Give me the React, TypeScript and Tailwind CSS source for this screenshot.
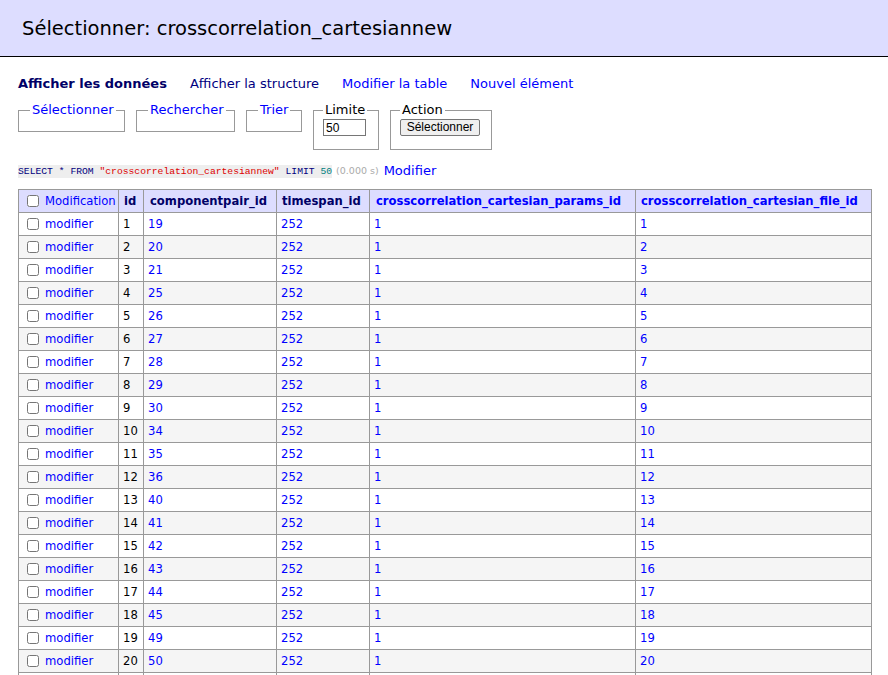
import React from "react";

const pairs = [19, 20, 21, 25, 26, 27, 28, 29, 30, 34, 35, 36, 40, 41, 42, 43, 44, 45, 49, 50, 51];

const Box = () => (
  <input type="checkbox" className="m-0 mr-[6px] h-[12px] w-[12px] align-[-2px]" readOnly />
);

const Legend = ({ children, link }: { children: React.ReactNode; link?: boolean }) => (
  <legend className={`px-[2px] ${link ? "text-[#0000ff]" : "text-black"}`}>{children}</legend>
);

export default function App() {
  return (
    <div className="min-h-screen bg-white text-[13px] leading-[16px] text-black" style={{ fontFamily: '"DejaVu Sans", Verdana, sans-serif' }}>
      <div className="flex h-[57px] items-center border-b border-black bg-[#ddf] pl-[22px] pt-[2px]">
        <h2 className="text-[19.5px] font-normal">Sélectionner: crosscorrelation_cartesiannew</h2>
      </div>

      <div className="pl-[18px]">
        <div className="mt-[19px] flex gap-[23px]">
          <span className="font-bold text-[#000066]">Afficher les données</span>
          <span className="text-[#000080]">Afficher la structure</span>
          <span className="text-[#0000ff]">Modifier la table</span>
          <span className="text-[#0000ff]">Nouvel élément</span>
        </div>

        <div className="mt-[10px] flex items-start gap-[11px]">
          <fieldset className="h-[30px] w-[107px] border border-[#999] pl-[11px] pr-0">
            <Legend link>Sélectionner</Legend>
          </fieldset>
          <fieldset className="h-[30px] w-[99px] border border-[#999] pl-[11px] pr-0">
            <Legend link>Rechercher</Legend>
          </fieldset>
          <fieldset className="h-[30px] w-[56px] border border-[#999] pl-[11px] pr-0">
            <Legend link>Trier</Legend>
          </fieldset>
          <fieldset className="h-[48px] w-[66px] border border-[#999] pl-[9px] pr-0">
            <Legend>Limite</Legend>
            <input
              readOnly
              value="50"
              className="mt-[1px] h-[17px] w-[43px] border border-[#767676] px-[2px] text-[12px] leading-[15px]"
              style={{ fontFamily: '"Liberation Sans", Arial, sans-serif' }}
            />
          </fieldset>
          <fieldset className="h-[48px] w-[102px] border border-[#999] pl-[9px] pr-0">
            <Legend>Action</Legend>
            <button
              className="mt-[1px] h-[17px] w-[80px] rounded-[2px] border border-[#767676] bg-[#efefef] text-[12px] leading-[15px]"
              style={{ fontFamily: '"Liberation Sans", Arial, sans-serif' }}
            >
              Sélectionner
            </button>
          </fieldset>
        </div>

        <div className="mt-[13px] flex items-center">
          <code
            className="bg-[#eee] text-[9.7px] leading-[13px]"
            style={{ fontFamily: '"Liberation Mono", "DejaVu Sans Mono", monospace' }}
          >
            <span className="text-[#000080]">SELECT</span> <span className="text-[#000080]">*</span>{" "}
            <span className="text-[#000080]">FROM</span> <span className="text-[#dd0000]">"crosscorrelation_cartesiannew"</span>{" "}
            <span className="text-[#000080]">LIMIT</span> <span className="text-[#008080]">50</span>
          </code>
          <span className="ml-[4px] text-[9.5px] text-[#aaa]">(0.000 s)</span>
          <span className="ml-[5px] text-[#0000ff]">Modifier</span>
        </div>

        <table className="mt-[10px] w-[853px] table-fixed border-collapse text-[11.6px] leading-[14px]">
          <colgroup>
            <col className="w-[100px]" />
            <col className="w-[25px]" />
            <col className="w-[133px]" />
            <col className="w-[93px]" />
            <col className="w-[266px]" />
            <col className="w-[236px]" />
          </colgroup>
          <thead>
            <tr className="h-[23px] bg-[#ddf] text-left">
              <th className="border border-[#999] pl-[8px] pr-[2px] font-normal whitespace-nowrap text-[#0000ff]">
                <Box />
                Modification
              </th>
              <th className="border border-[#999] px-[5px] font-bold text-[#000066]">id</th>
              <th className="border border-[#999] px-[6px] font-bold text-[#000066]">componentpair_id</th>
              <th className="border border-[#999] px-[5px] font-bold text-[#000066]">timespan_id</th>
              <th className="border border-[#999] px-[6px] font-bold whitespace-nowrap text-[#0000ff]">crosscorrelation_cartesian_params_id</th>
              <th className="border border-[#999] px-[5px] font-bold whitespace-nowrap text-[#0000ff]">crosscorrelation_cartesian_file_id</th>
            </tr>
          </thead>
          <tbody>
            {pairs.map((p, i) => (
              <tr key={i} className={`h-[23px] ${i % 2 ? "bg-[#f5f5f5]" : "bg-white"}`}>
                <td className="border border-[#999] pl-[8px] whitespace-nowrap text-[#0000ff]">
                  <Box />
                  modifier
                </td>
                <td className="border border-[#999] px-[4px]">{i + 1}</td>
                <td className="border border-[#999] px-[4px] text-[#0000ff]">{p}</td>
                <td className="border border-[#999] px-[4px] text-[#0000ff]">252</td>
                <td className="border border-[#999] px-[4px] text-[#0000ff]">1</td>
                <td className="border border-[#999] px-[4px] text-[#0000ff]">{i + 1}</td>
              </tr>
            ))}
          </tbody>
        </table>
      </div>
    </div>
  );
}
